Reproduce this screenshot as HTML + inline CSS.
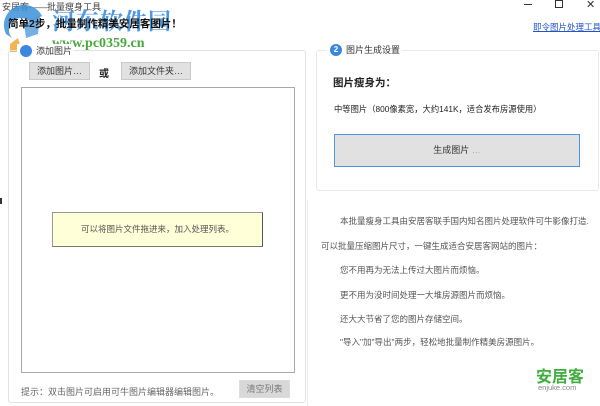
<!DOCTYPE html>
<html><head><meta charset="utf-8"><style>
*{margin:0;padding:0;box-sizing:border-box}
body{width:600px;height:406px;background:#fff;position:relative;overflow:hidden;font-family:"Liberation Sans","Noto Sans CJK SC",sans-serif;color:#222}
.a{position:absolute;white-space:nowrap}
.btn{position:absolute;background:#e1e1e1;border:1px solid #c8c8c8;font-size:9px;color:#333;text-align:center}
.t{font-size:8.5px;color:#555}
</style></head><body>
<div class="a" style="left:2px;top:0;font-size:9px;color:#444">安居客——批量瘦身工具</div>
<div class="a" style="left:524px;top:4px;width:8px;height:1px;background:#333"></div>
<div class="a" style="left:555px;top:0px;width:8px;height:8px;border:1px solid #333"></div>
<div class="a" style="left:586px;top:-2px;font-size:11px;color:#333">✕</div>
<svg class="a" style="left:0;top:4px" width="50" height="48"><path d="M6 30 A20 20 0 0 1 42 12 L30 18 A10 10 0 0 0 12 34 Z" fill="#3b8fd8" opacity=".85"/><path d="M10 40 L18 34 L22 48 L10 48Z" fill="#f0a030" opacity=".8"/><path d="M24 20 L40 12 L38 30 L26 34Z" fill="#3b8fd8" opacity=".7"/></svg>
<div class="a" style="left:52px;top:3px;font-size:23px;font-weight:bold;color:#3d8ee0;letter-spacing:1px;font-family:'Noto Serif CJK SC',serif;opacity:.9">河东软件园</div>
<div class="a" style="left:8px;top:16px;font-size:10.5px;font-weight:bold;color:#111">简单2步，批量制作精美安居客图片！</div>
<div class="a" style="left:52px;top:36px;font-size:14px;font-weight:bold;color:#48a83c;font-family:'Liberation Serif',serif">www.pc0359.cn</div>
<div class="a" style="left:533px;top:21px;font-size:8.5px;color:#2255cc;text-decoration:underline">即令图片处理工具</div>
<div class="a" style="left:8px;top:50px;width:298px;height:353px;border:1px solid #e2e2e2;border-radius:3px"></div>
<div class="a" style="left:17px;top:44px;width:16px;height:14px;background:#fff"></div>
<div class="a" style="left:20px;top:45px;width:12px;height:12px;border-radius:50%;background:#3a87e0"></div>
<div class="a" style="left:34px;top:44px;font-size:9px;color:#333;background:#fff;padding:0 2px">添加图片</div>
<div class="btn" style="left:29px;top:62px;width:61px;height:18px;line-height:16px">添加图片…</div>
<div class="a" style="left:99px;top:65px;font-size:10px;font-weight:bold">或</div>
<div class="btn" style="left:121px;top:62px;width:70px;height:18px;line-height:16px">添加文件夹…</div>
<div class="a" style="left:21px;top:87px;width:274px;height:286px;border:1px solid #aaa"></div>
<div class="a" style="left:52px;top:212px;width:211px;height:35px;background:#ffffd8;border:1px solid #999;border-right-color:#555;border-bottom-color:#777;font-size:8.5px;color:#555;text-align:center;line-height:33px">可以将图片文件拖进来，加入处理列表。</div>
<div class="a" style="left:21px;top:385px;font-size:9px;color:#666">提示：双击图片可启用可牛图片编辑器编辑图片。</div>
<div class="btn" style="left:239px;top:380px;width:51px;height:18px;line-height:17px;color:#777;border-color:#ddd;background:#d8d8d8">清空列表</div>
<div class="a" style="left:316px;top:50px;width:283px;height:141px;border:1px solid #e8e8e8;border-radius:3px"></div>
<div class="a" style="left:326px;top:43px;width:76px;height:14px;background:#fff"></div>
<div class="a" style="left:330px;top:44px;width:12px;height:12px;border-radius:50%;background:#3a87e0;color:#fff;font-size:8px;font-weight:bold;text-align:center;line-height:12px">2</div>
<div class="a" style="left:346px;top:43px;font-size:9px;color:#333">图片生成设置</div>
<div class="a" style="left:333px;top:75px;font-size:10.5px;font-weight:bold;color:#222">图片瘦身为：</div>
<div class="a" style="left:334px;top:103px;font-size:8.3px;color:#222">中等图片（800像素宽，大约141K，适合发布房源使用）</div>
<div class="a" style="left:334px;top:134px;width:246px;height:33px;background:#e1e1e1;border:1px solid #4a98e0;font-size:9px;color:#333;text-align:center;line-height:31px">生成图片 <span style="color:#aaa">…</span></div>
<div class="a" style="left:307px;top:200px;width:1px;height:206px;background:#e6eef8"></div>
<div class="a t" style="left:340px;top:215px">本批量瘦身工具由安居客联手国内知名图片处理软件可牛影像打造.</div>
<div class="a t" style="left:321px;top:240px">可以批量压缩图片尺寸，一键生成适合安居客网站的图片：</div>
<div class="a t" style="left:340px;top:264px">您不用再为无法上传过大图片而烦恼。</div>
<div class="a t" style="left:340px;top:289px">更不用为没时间处理一大堆房源图片而烦恼。</div>
<div class="a t" style="left:340px;top:313px">还大大节省了您的图片存储空间。</div>
<div class="a t" style="left:340px;top:336px">"导入"加"导出"两步，轻松地批量制作精美房源图片。</div>
<div class="a" style="left:536px;top:363px;font-size:16px;font-weight:bold;color:#3fae3f">安居客</div>
<div class="a" style="left:538px;top:383px;font-size:7.5px;color:#888">enjuke.com</div>
<div class="a" style="left:0;top:198px;width:2px;height:6px;background:#333"></div>
</body></html>
